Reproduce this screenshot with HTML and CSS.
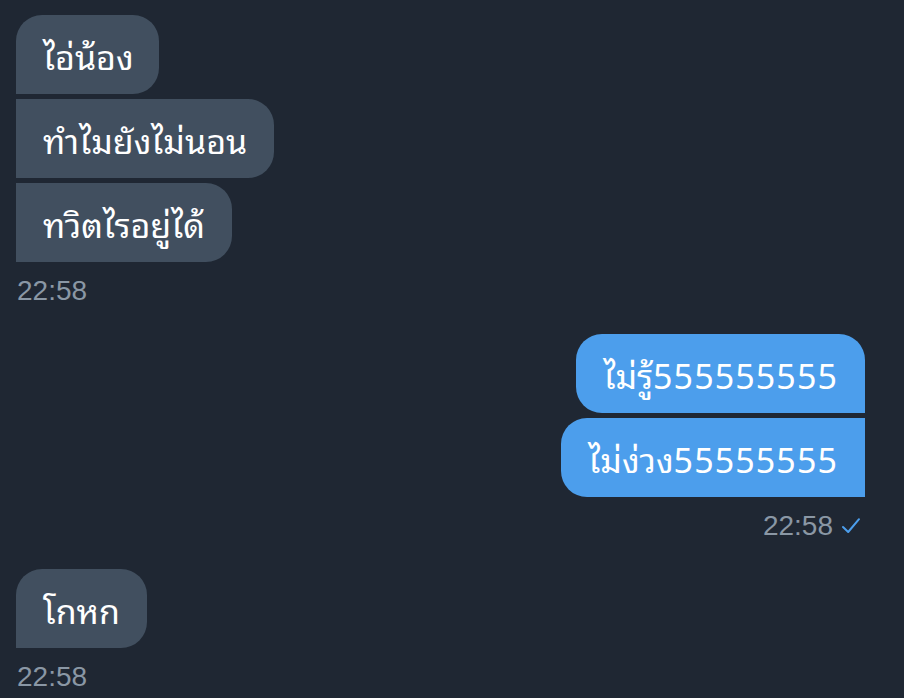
FILE: index.html
```html
<!DOCTYPE html>
<html lang="th">
<head>
<meta charset="utf-8">
<title>Messages</title>
<link rel="stylesheet" href="styles.css">
</head>
<body>
<div class="thread">
  <div class="group received">
    <div class="bubble first">ไอ่น้อง</div>
    <div class="bubble middle">ทำไมยังไม่นอน</div>
    <div class="bubble last">ทวิตไรอยู่ได้</div>
    <div class="meta">22:58</div>
  </div>
  <div class="group sent">
    <div class="bubble first">ไม่รู้<span class="num">555555555</span></div>
    <div class="bubble last">ไม่ง่วง<span class="num">55555555</span></div>
    <div class="meta">22:58
      <svg class="check" viewBox="0 0 20 20" width="20" height="20" aria-hidden="true"><path d="M2 11 L7.2 16 L18 3.2" fill="none" stroke="currentColor" stroke-width="2" stroke-linecap="round" stroke-linejoin="round"/></svg>
    </div>
  </div>
  <div class="group received">
    <div class="bubble single">โกหก</div>
    <div class="meta">22:58</div>
  </div>
</div>
</body>
</html>
```
FILE: styles.css
```css
html, body {
  margin: 0;
  padding: 0;
  background: #1f2733;
  height: 100%;
}
body {
  font-family: "Noto Sans Thai Looped", "Noto Sans Thai", "Noto Sans", "Liberation Sans", sans-serif;
  color: #ffffff;
}
.thread {
  display: flex;
  flex-direction: column;
  padding: 15px 39px 0 16px;
}
.group {
  display: flex;
  flex-direction: column;
  gap: 5px;
}
.group.received {
  align-items: flex-start;
}
.group.sent {
  align-items: flex-end;
  margin-top: 27px;
}
.group.sent + .group.received {
  margin-top: 27px;
}
.bubble {
  font-size: 34px;
  line-height: 39px;
  padding: 20px 27px;
  border-radius: 26px;
  white-space: nowrap;
}
.bubble .num {
  letter-spacing: 1.1px;
}
.received .bubble {
  background: #414f5f;
}
.received .first {
  padding-right: 25px;
}
.sent .bubble {
  background: #4c9eec;
}
.received .first { border-bottom-left-radius: 0; }
.received .middle { border-top-left-radius: 0; border-bottom-left-radius: 0; }
.received .last { border-top-left-radius: 0; border-bottom-left-radius: 0; }
.received .single { border-bottom-left-radius: 0; }
.sent .first { border-bottom-right-radius: 0; }
.sent .last { border-top-right-radius: 0; border-bottom-right-radius: 0; }
.meta {
  font-family: "Liberation Sans", Arial, sans-serif;
  font-size: 28px;
  line-height: 32px;
  color: #8a97a5;
  margin-top: 8px;
  padding-left: 1px;
  display: flex;
  align-items: center;
  gap: 8px;
}
.sent .meta {
  padding-right: 4px;
}
.check {
  color: #4c9eec;
}
```
